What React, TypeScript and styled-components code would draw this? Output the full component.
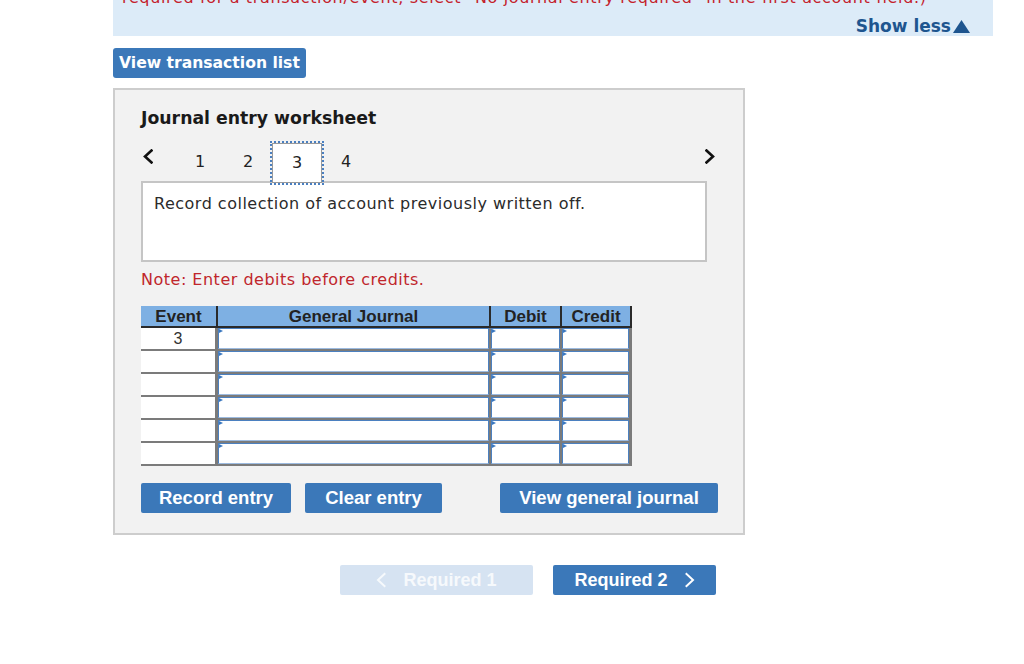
import React from "react";
import styled, { createGlobalStyle } from "styled-components";

const GlobalStyle = createGlobalStyle`
  html, body {
    margin: 0;
    padding: 0;
    background: #ffffff;
  }
  body {
    font-family: "DejaVu Sans", Verdana, sans-serif;
    color: #222;
  }
  * {
    box-sizing: border-box;
  }
`;

const Page = styled.div`
  width: 1024px;
  height: 664px;
  overflow: hidden;
  padding-left: 113px;
`;

// Faixa azul do topo (texto de instrução cortado)
const Banner = styled.div`
  width: 880px;
  margin-top: -12px;
  background: #dcebf8;
  padding-left: 9px;
`;

const BannerText = styled.p`
  margin: 0;
  font-size: 16px;
  letter-spacing: 0.65px;
  line-height: 20px;
  color: #c4212b;
  white-space: nowrap;
`;

const ShowLessRow = styled.div`
  display: flex;
  justify-content: flex-end;
  padding-right: 23px;
  margin-top: 8px;
  height: 20px;
`;

const ShowLess = styled.span`
  display: flex;
  align-items: center;
  gap: 2px;
  font-size: 17px;
  font-weight: bold;
  line-height: 20px;
  color: #1e558f;
`;

const ListButton = styled.button`
  display: block;
  margin-top: 12px;
  height: 30px;
  padding: 0 6px;
  border: none;
  border-radius: 3px;
  background: #3b78b9;
  color: #fff;
  font-family: "DejaVu Sans", Verdana, sans-serif;
  font-size: 15.6px;
  font-weight: bold;
`;

// Painel do worksheet
const Panel = styled.section`
  width: 632px;
  margin-top: 10px;
  background: #f2f2f2;
  border: 2px solid #cdcdcd;
  padding: 18px 36px 20px 26px;
`;

const Title = styled.h2`
  margin: 0;
  font-size: 17.3px;
  line-height: 20px;
  font-weight: bold;
  color: #1a1a1a;
`;

const Pager = styled.div`
  display: flex;
  align-items: flex-start;
  height: 38px;
  margin-top: 15px;
  width: calc(100% + 8px);
`;

const Arrow = styled.span<{ $right?: boolean }>`
  display: flex;
  width: 35px;
  height: 38px;
  padding-top: 6px;
  padding-left: 2px;
  justify-content: ${(p) => (p.$right ? "flex-end" : "flex-start")};
  margin-left: ${(p) => (p.$right ? "auto" : "0")};
`;

const PageTab = styled.span<{ $active?: boolean }>`
  width: ${(p) => (p.$active ? "50px" : "48px")};
  height: ${(p) => (p.$active ? "40px" : "38px")};
  line-height: 38px;
  text-align: center;
  font-size: 16px;
  color: #222;
  background: ${(p) => (p.$active ? "#fff" : "transparent")};
  border: ${(p) => (p.$active ? "1px solid #9a9a9a" : "none")};
  outline: ${(p) => (p.$active ? "2px dotted #4a7fc0" : "none")};
  position: relative;
  z-index: 1;
`;

const Description = styled.div`
  height: 81px;
  background: #fff;
  border: 2px solid #c5c5c5;
  padding: 10px 11px;
  font-size: 16px;
  letter-spacing: 0.5px;
  line-height: 22px;
  color: #2b2b2b;
`;

const Note = styled.p`
  margin: 8px 0 0;
  font-size: 16px;
  letter-spacing: 0.5px;
  line-height: 20px;
  color: #c0262c;
`;

// Tabela do diário
const Table = styled.div`
  margin-top: 16px;
  width: 491px;
  display: grid;
  grid-template-columns: 77px 273px 71px 70px;
  font-family: "Liberation Sans", Arial, sans-serif;
`;

const HeadCell = styled.div`
  height: 22px;
  line-height: 21px;
  text-align: center;
  background: #7eb0e3;
  border-right: 2px solid #2a2a2a;
  border-bottom: 2px solid #2a2a2a;
  font-size: 17px;
  font-weight: bold;
  color: #222;
`;

const EventCell = styled.div`
  height: 23px;
  line-height: 21px;
  text-align: center;
  background: #fff;
  border-right: 3px solid #7b7b7b;
  border-bottom: 2px solid #7b7b7b;
  font-size: 16px;
  color: #333;
`;

const EntryCell = styled.div<{ $last?: boolean }>`
  height: 23px;
  border-right: ${(p) => (p.$last ? "3px" : "2px")} solid #7b7b7b;
  border-bottom: 2px solid #7b7b7b;
`;

const Field = styled.div`
  position: relative;
  height: 100%;
  background: #fff;
  border: 1px solid #4b80c0;
  border-bottom-color: #9dbbe0;

  &::before {
    content: "";
    position: absolute;
    top: 0;
    left: 0;
    width: 0;
    height: 0;
    border-top: 2px solid transparent;
    border-bottom: 2px solid transparent;
    border-left: 4px solid #3b78c0;
  }
`;

const Actions = styled.div`
  display: flex;
  gap: 14px;
  margin-top: 17px;
`;

const ActionButton = styled.button<{ $width: number; $gapBefore?: number }>`
  flex-shrink: 0;
  width: ${(p) => p.$width}px;
  height: 30px;
  margin-left: ${(p) => p.$gapBefore ?? 0}px;
  padding: 0;
  border: none;
  border-radius: 2px;
  background: #3b78b9;
  color: #fff;
  font-family: "Liberation Sans", Arial, sans-serif;
  font-size: 18.5px;
  font-weight: bold;
`;

const BottomNav = styled.div`
  display: flex;
  gap: 20px;
  margin-top: 30px;
  padding-left: 227px;
`;

const NavButton = styled.button<{ $width: number; $disabled?: boolean }>`
  display: flex;
  align-items: center;
  justify-content: center;
  gap: 17px;
  flex-shrink: 0;
  width: ${(p) => p.$width}px;
  height: 30px;
  padding: 0;
  border: none;
  border-radius: 2px;
  background: ${(p) => (p.$disabled ? "#d6e3f2" : "#3b78b9")};
  color: ${(p) => (p.$disabled ? "#f6f9fc" : "#fff")};
  font-family: "Liberation Sans", Arial, sans-serif;
  font-size: 18px;
  font-weight: bold;
`;

const Chevron = ({ dir, color, w = 10, h = 15, sw = 2.6 }: { dir: "left" | "right"; color: string; w?: number; h?: number; sw?: number }) => (
  <svg width={w} height={h} viewBox="0 0 10 15" fill="none">
    <polyline
      points={dir === "left" ? "8.5,1.5 2,7.5 8.5,13.5" : "1.5,1.5 8,7.5 1.5,13.5"}
      stroke={color}
      strokeWidth={sw}
      strokeLinecap="square"
      strokeLinejoin="miter"
    />
  </svg>
);

const rows = ["3", "", "", "", "", ""];

export default function App() {
  return (
    <Page>
      <GlobalStyle />
      <Banner>
        <BannerText>
          required for a transaction/event, select "No journal entry required" in the first account field.)
        </BannerText>
        <ShowLessRow>
          <ShowLess>
            Show less
            <svg width="17" height="13" viewBox="0 0 17 13">
              <polygon points="8.5,0 17,13 0,13" fill="#1e558f" />
            </svg>
          </ShowLess>
        </ShowLessRow>
      </Banner>

      <ListButton>View transaction list</ListButton>

      <Panel>
        <Title>Journal entry worksheet</Title>
        <Pager>
          <Arrow>
            <Chevron dir="left" color="#111" />
          </Arrow>
          <PageTab>1</PageTab>
          <PageTab>2</PageTab>
          <PageTab $active>3</PageTab>
          <PageTab>4</PageTab>
          <Arrow $right>
            <Chevron dir="right" color="#111" />
          </Arrow>
        </Pager>
        <Description>Record collection of account previously written off.</Description>
        <Note>Note: Enter debits before credits.</Note>

        <Table>
          <HeadCell>Event</HeadCell>
          <HeadCell>General Journal</HeadCell>
          <HeadCell>Debit</HeadCell>
          <HeadCell>Credit</HeadCell>
          {rows.map((ev, i) => (
            <React.Fragment key={i}>
              <EventCell>{ev}</EventCell>
              <EntryCell>
                <Field />
              </EntryCell>
              <EntryCell>
                <Field />
              </EntryCell>
              <EntryCell $last>
                <Field />
              </EntryCell>
            </React.Fragment>
          ))}
        </Table>

        <Actions>
          <ActionButton $width={150}>Record entry</ActionButton>
          <ActionButton $width={137}>Clear entry</ActionButton>
          <ActionButton $width={218} $gapBefore={44}>
            View general journal
          </ActionButton>
        </Actions>
      </Panel>

      <BottomNav>
        <NavButton $width={193} $disabled>
          <Chevron dir="left" color="#f6f9fc" w={10} h={16} sw={2} />
          Required 1
        </NavButton>
        <NavButton $width={163}>
          Required 2
          <Chevron dir="right" color="#fff" w={10} h={16} sw={2} />
        </NavButton>
      </BottomNav>
    </Page>
  );
}
